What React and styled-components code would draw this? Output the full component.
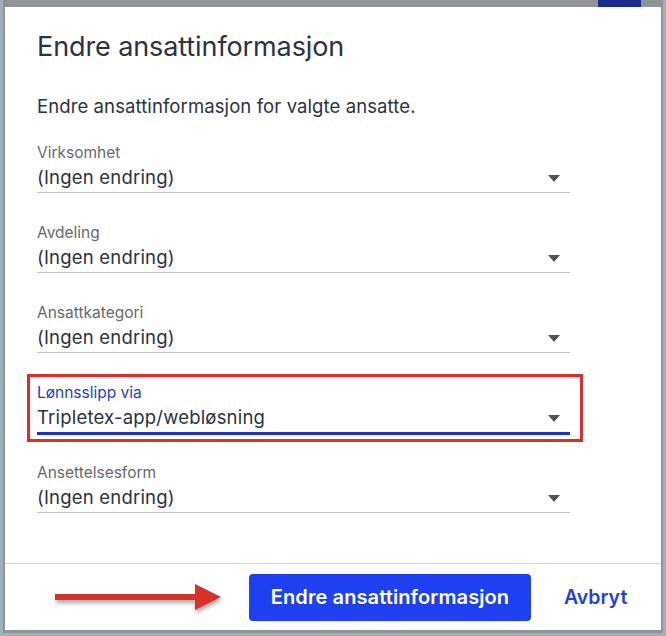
import React from 'react'
import styled, { createGlobalStyle } from 'styled-components'

const GlobalStyle = createGlobalStyle`
  html, body {
    margin: 0;
    padding: 0;
    background: #8f979b;
  }
  body {
    font-family: Inter, "Noto Sans", "Liberation Sans", sans-serif;
  }
`

const Backdrop = styled.div`
  width: 666px;
  height: 636px;
  box-sizing: border-box;
  background: #8f9498;
  border-left: 3px solid #9eb0ba;
  border-right: 3px solid #9eb0ba;
  border-bottom: 3px solid #9eb0ba;
  display: flex;
  flex-direction: column;
  padding: 0 2px 3px 2px;
`

const TopStrip = styled.div`
  height: 7px;
  display: flex;
  justify-content: flex-end;
  padding-right: 20px;
`

const PageBlock = styled.div`
  width: 43px;
  height: 7px;
  background: #1b2b8c;
`

const Dialog = styled.div`
  flex: 1;
  background: #fff;
  display: flex;
  flex-direction: column;
  color: #2b3245;
`

const Body = styled.div`
  flex: 1;
  padding: 0 32px;
`

const Title = styled.h1`
  margin: 0;
  padding-top: 22px;
  font-size: 27px;
  font-weight: 400;
  line-height: 36px;
  letter-spacing: -0.1px;
`

const Lead = styled.p`
  margin: 0;
  padding-top: 29px;
  font-size: 18.5px;
  line-height: 24px;
  letter-spacing: 0.1px;
`

const FieldList = styled.div`
  display: flex;
  flex-direction: column;
  gap: 31px;
  padding-top: 26px;
  width: 533px;
`

const Field = styled.div`
  position: relative;
  display: flex;
  flex-direction: column;

  ${(p) => p.$highlighted && `
    &::after {
      content: '';
      position: absolute;
      left: -10px;
      right: -13px;
      top: -10px;
      bottom: -9px;
      border: 3px solid #d8312a;
      pointer-events: none;
    }
  `}
`

const Label = styled.span`
  font-size: 15.5px;
  line-height: 18px;
  color: ${(p) => (p.$active ? '#1d3fd8' : '#66696f')};
`

const Select = styled.div`
  display: flex;
  align-items: center;
  justify-content: space-between;
  height: 30px;
  border-bottom: ${(p) => (p.$active ? '3px solid #1c35c6' : '1px solid #c4c4c4')};
  margin-bottom: ${(p) => (p.$active ? '-2px' : '0')};
  padding-right: 10px;
`

const Value = styled.span`
  font-size: 18.5px;
  line-height: 24px;
  color: #2b3245;
  letter-spacing: 0.2px;
`

const Caret = styled.span`
  width: 0;
  height: 0;
  border-left: 6.5px solid transparent;
  border-right: 6.5px solid transparent;
  border-top: 7px solid #555;
  margin-top: 2px;
`

const Footer = styled.div`
  border-top: 1px solid #d3d3d3;
  display: flex;
  align-items: center;
  height: 66px;
  padding: 0 32px 0 50px;
`

const ArrowWrap = styled.div`
  width: 166px;
  height: 28px;
  margin-right: 28px;
  filter: drop-shadow(1px 3px 2px rgba(0, 0, 0, 0.35));
`

const PrimaryButton = styled.button`
  height: 47px;
  width: 282px;
  border: none;
  border-radius: 4px;
  background: #1f40f0;
  color: #fff;
  font-family: inherit;
  font-size: 20px;
  font-weight: 600;
  letter-spacing: 0.1px;
  cursor: pointer;
`

const LinkButton = styled.button`
  margin-left: 33px;
  border: none;
  background: none;
  padding: 0;
  color: #1f40e8;
  font-family: inherit;
  font-size: 19.5px;
  font-weight: 600;
  cursor: pointer;
`

const fields = [
  { label: 'Virksomhet', value: '(Ingen endring)' },
  { label: 'Avdeling', value: '(Ingen endring)' },
  { label: 'Ansattkategori', value: '(Ingen endring)' },
  { label: 'Lønnsslipp via', value: 'Tripletex-app/webløsning', active: true },
  { label: 'Ansettelsesform', value: '(Ingen endring)' },
]

const Arrow = () => (
  <ArrowWrap>
    <svg width="166" height="28" viewBox="0 0 166 28">
      <rect x="0" y="11" width="142" height="6" fill="#d8312a" />
      <polygon points="140,1 166,14 140,27" fill="#d8312a" />
    </svg>
  </ArrowWrap>
)

const App = () => {
  return (
    <>
      <GlobalStyle />
      <Backdrop>
        <TopStrip>
          <PageBlock />
        </TopStrip>
        <Dialog>
          <Body>
            <Title>Endre ansattinformasjon</Title>
            <Lead>Endre ansattinformasjon for valgte ansatte.</Lead>
            <FieldList>
              {fields.map((f) => (
                <Field key={f.label} $highlighted={f.active}>
                  <Label $active={f.active}>{f.label}</Label>
                  <Select $active={f.active}>
                    <Value>{f.value}</Value>
                    <Caret />
                  </Select>
                </Field>
              ))}
            </FieldList>
          </Body>
          <Footer>
            <Arrow />
            <PrimaryButton>Endre ansattinformasjon</PrimaryButton>
            <LinkButton>Avbryt</LinkButton>
          </Footer>
        </Dialog>
      </Backdrop>
    </>
  )
}

export default App
